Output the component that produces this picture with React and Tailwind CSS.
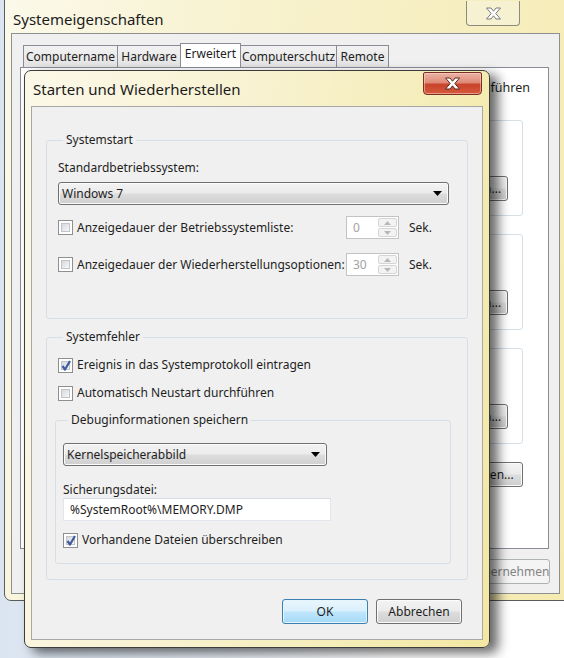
import React from 'react';

const btnBg =
  'bg-[linear-gradient(#f3f3f3_0%,#ebebeb_48%,#dddddd_52%,#cfcfcf_100%)] shadow-[inset_0_0_0_1px_#fbfbfb]';

// Windows 7 style push button
function WinButton({ children, className = '', focused = false, disabled = false }) {
  return (
    <div
      className={`flex h-[25px] items-center justify-center rounded-[3px] border text-[12px] ${
        focused
          ? 'border-[#3c7fb1] bg-[linear-gradient(#eaf6fd_0%,#d9f0fc_48%,#bee6fd_52%,#a7d9f5_100%)] shadow-[inset_0_0_0_1px_#e4f5fc]'
          : disabled
          ? 'border-[#adb2b5] bg-[#f4f4f4] text-[#838383]'
          : `border-[#707070] ${btnBg}`
      } ${className}`}
    >
      {children}
    </div>
  );
}

function Combo({ value, className = '' }) {
  return (
    <div className={`flex h-[23px] items-center justify-between rounded-[3px] border border-[#707070] pl-[3px] pr-[6px] ${btnBg} ${className}`}>
      <span className="text-[12px]">{value}</span>
      <svg width="9" height="5" viewBox="0 0 9 5">
        <path d="M0 0 H9 L4.5 5 Z" fill="#000" />
      </svg>
    </div>
  );
}

function Checkbox({ checked }) {
  return (
    <span className="relative flex h-[15px] w-[15px] shrink-0 border border-[#8f8f8f] bg-white p-[2px]">
      <span className="h-full w-full border border-[#bfc4cb] bg-gradient-to-br from-[#d6d9de] to-[#f7f7f7]" />
      {checked && (
        <svg className="absolute left-[1px] top-[0px]" width="12" height="13" viewBox="0 0 12 13">
          <path d="M2.5 7 L5 10.5 L10 2" fill="none" stroke="#3f5b9e" strokeWidth="2.2" strokeLinejoin="round" />
        </svg>
      )}
    </span>
  );
}

function Spinner({ value }) {
  return (
    <div className="flex h-[23px] w-[53px] border border-[#c3c3c3] bg-white">
      <span className="flex-1 pl-[6px] text-[12px] leading-[21px] text-[#a3a3a3]">{value}</span>
      <div className="my-[1px] mr-[1px] flex w-[19px] flex-col gap-[1px]">
        <div className="flex flex-1 items-center justify-center rounded-[2px] border border-[#d5d5d5] bg-[#f3f3f3]">
          <svg width="7" height="4" viewBox="0 0 7 4"><path d="M0 4 L3.5 0 L7 4 Z" fill="#b8b8b8" /></svg>
        </div>
        <div className="flex flex-1 items-center justify-center rounded-[2px] border border-[#d5d5d5] bg-[#f3f3f3]">
          <svg width="7" height="4" viewBox="0 0 7 4"><path d="M0 0 L3.5 4 L7 0 Z" fill="#b8b8b8" /></svg>
        </div>
      </div>
    </div>
  );
}

function CloseGlyph({ stroke = '#4d4d4d' }) {
  return (
    <svg width="17" height="13" viewBox="0 0 17 13">
      <path
        d="M1.5 1 H6 L8.5 4.2 L11 1 H15.5 L10.8 6.5 L15.5 12 H11 L8.5 8.8 L6 12 H1.5 L6.2 6.5 Z"
        fill="#ffffff"
        stroke={stroke}
        strokeWidth="1"
        strokeLinejoin="round"
      />
    </svg>
  );
}

function GroupBox({ title, className = '', children }) {
  return (
    <fieldset className={`rounded-[3px] border border-[#d5dfe5] ${className}`}>
      <legend className="ml-[5px] px-[3px] text-[12px] leading-[16px]">{title}</legend>
      {children}
    </fieldset>
  );
}

// Background window: Systemeigenschaften
function SystemProperties() {
  const tabs = ['Computername', 'Hardware', 'Erweitert', 'Computerschutz', 'Remote'];
  const widths = ['w-[95px]', 'w-[64px]', 'w-[61px]', 'w-[97px]', 'w-[53px]'];
  return (
    <div className="absolute left-[4px] top-[-10px] flex h-[611px] w-[580px] flex-col rounded-[7px] border border-[#5b5b5b] bg-[linear-gradient(100deg,#fbf9ea_0%,#f8f2cf_35%,#f6eebf_70%,#f4eab0_100%)] px-[6px] pb-[6px]">
      <div className="relative flex h-[42px] items-center pl-[2px] pt-[14px]">
        <span className="text-[15px] text-[#1b1b1b]">Systemeigenschaften</span>
        <div className="absolute left-[455px] top-[10px] flex h-[25px] w-[54px] items-center justify-center rounded-b-[4px] border border-t-0 border-[#8d8a7c] bg-[#f7f3de]/60">
          <CloseGlyph stroke="#7a7a7a" />
        </div>
      </div>
      <div className="flex w-[549px] flex-1 flex-col border border-[#8e8f8f] bg-[#f0f0f0]">
        <div className="mt-[10px] flex h-[23px] items-end pl-[11px]">
          {tabs.map((t, i) => (
            <div
              key={t}
              className={`${widths[i]} flex items-center justify-center whitespace-nowrap border border-[#898c95] text-[12px] ${
                i === 2
                  ? 'relative z-10 -mx-[1px] h-[24px] border-b-0 bg-white pb-[3px]'
                  : 'h-[22px] border-b-0 bg-gradient-to-b from-[#f2f2f2] to-[#e3e3e3]'
              } ${i > 0 && i !== 2 && i !== 3 ? '-ml-[1px]' : ''}`}
            >
              {t}
            </div>
          ))}
        </div>
        <div className="ml-[8px] flex h-[482px] w-[529px] flex-col border border-[#898c95] bg-white pl-[14px] pr-[25px] pt-[12px]">
          <div className="-mr-[7px] flex justify-end overflow-hidden whitespace-nowrap text-[12.5px] leading-[16px]">
            <span className="shrink-0">Sie müssen als Administrator angemeldet sein, um diese Änderungen durchführen</span>
          </div>
          <p className="text-[12.5px] leading-[16px]">zu können.</p>
          <div className="mt-[8px] flex flex-col gap-[18px]">
            {['Einstellungen...', 'Einstellungen...', 'Einstellungen...'].map((b, i) => (
              <div key={i} className="flex h-[96px] flex-col items-end justify-end rounded-[3px] border border-[#d5dfe5] pb-[14px] pr-[14px]">
                <WinButton className="w-[100px]">{b}</WinButton>
              </div>
            ))}
          </div>
          <div className="mt-[18px] flex justify-end">
            <WinButton className="w-[150px]">Umgebungsvariablen...</WinButton>
          </div>
        </div>
        <div className="mt-[10px] flex justify-end gap-[8px] pr-[9px]">
          <WinButton className="w-[75px]">OK</WinButton>
          <WinButton className="w-[75px]">Abbrechen</WinButton>
          <WinButton className="w-[76px]" disabled>Übernehmen</WinButton>
        </div>
      </div>
    </div>
  );
}

// Modal dialog: Starten und Wiederherstellen
function StartupRecovery() {
  return (
    <div className="absolute left-[24px] top-[70px] flex h-[578px] w-[466px] flex-col rounded-[7px] border border-[#3d3d3d] bg-[linear-gradient(100deg,#fbf8e8_0%,#f8f2d2_40%,#f5edb8_75%,#f3e7a2_100%)] px-[6px] pb-[7px] shadow-[8px_5px_12px_rgba(0,0,0,0.6)]">
      <div className="relative flex h-[35px] items-center pl-[2px] pt-[2px]">
        <span className="text-[15px] text-[#1b1b1b]">Starten und Wiederherstellen</span>
        <div className="absolute left-[392px] top-[1px] flex h-[23px] w-[59px] items-center justify-center rounded-b-[4px] rounded-t-[2px] border border-[#7b2f21] bg-[linear-gradient(#eab3a6_0%,#df8b77_45%,#c8432b_55%,#d65a3d_100%)] shadow-[inset_0_0_0_1px_rgba(255,220,210,0.5)]">
          <CloseGlyph stroke="#5a2a22" />
        </div>
      </div>
      <div className="flex flex-1 flex-col border border-[#a7a7a7] bg-[#f0f0f0] px-[14px] pt-[25px] text-[#1e1e1e]">
        <GroupBox title="Systemstart" className="h-[187px] pl-[11px] pr-[18px]">
          <div className="mt-[12px] text-[12px] leading-[16px]">Standardbetriebssystem:</div>
          <Combo value="Windows 7" className="mt-[6px] w-[391px]" />
          <div className="mt-[11px] flex h-[23px] items-center">
            <Checkbox />
            <span className="ml-[4px] w-[269px] text-[12px]">Anzeigedauer der Betriebssystemliste:</span>
            <Spinner value="0" />
            <span className="ml-[10px] text-[12px]">Sek.</span>
          </div>
          <div className="mt-[14px] flex h-[23px] items-center">
            <Checkbox />
            <span className="ml-[4px] w-[269px] text-[12px]">Anzeigedauer der Wiederherstellungsoptionen:</span>
            <Spinner value="30" />
            <span className="ml-[10px] text-[12px]">Sek.</span>
          </div>
        </GroupBox>
        <GroupBox title="Systemfehler" className="mt-[10px] h-[251px] pl-[11px] pr-[16px]">
          <div className="mt-[12px] flex h-[16px] items-center">
            <Checkbox checked />
            <span className="ml-[4px] text-[12px]">Ereignis in das Systemprotokoll eintragen</span>
          </div>
          <div className="mt-[12px] flex h-[16px] items-center">
            <Checkbox />
            <span className="ml-[4px] text-[12px]">Automatisch Neustart durchführen</span>
          </div>
          <GroupBox title="Debuginformationen speichern" className="-ml-[3px] mt-[11px] h-[152px] pl-[7px]">
            <Combo value="Kernelspeicherabbild" className="mt-[15px] w-[264px]" />
            <div className="mt-[16px] text-[12px] leading-[16px]">Sicherungsdatei:</div>
            <div className="flex h-[23px] w-[268px] items-center border border-[#e0e6ec] border-t-[#d5dbe2] bg-white pl-[6px] text-[12px]">
              %SystemRoot%\MEMORY.DMP
            </div>
            <div className="mt-[11px] flex h-[16px] items-center">
              <Checkbox checked />
              <span className="ml-[4px] text-[12px]">Vorhandene Dateien überschreiben</span>
            </div>
          </GroupBox>
        </GroupBox>
        <div className="mt-[19px] flex justify-end gap-[8px] pr-[6px]">
          <WinButton focused className="w-[86px]">OK</WinButton>
          <WinButton className="w-[86px]">Abbrechen</WinButton>
        </div>
      </div>
    </div>
  );
}

export default function App() {
  return (
    <div className="relative h-[658px] w-[564px] overflow-hidden bg-[linear-gradient(90deg,#dbe5f1_0%,#e9eff7_40%,#ffffff_70%)] font-['Noto_Sans',sans-serif] text-[#1e1e1e]">
      <SystemProperties />
      <StartupRecovery />
    </div>
  );
}
